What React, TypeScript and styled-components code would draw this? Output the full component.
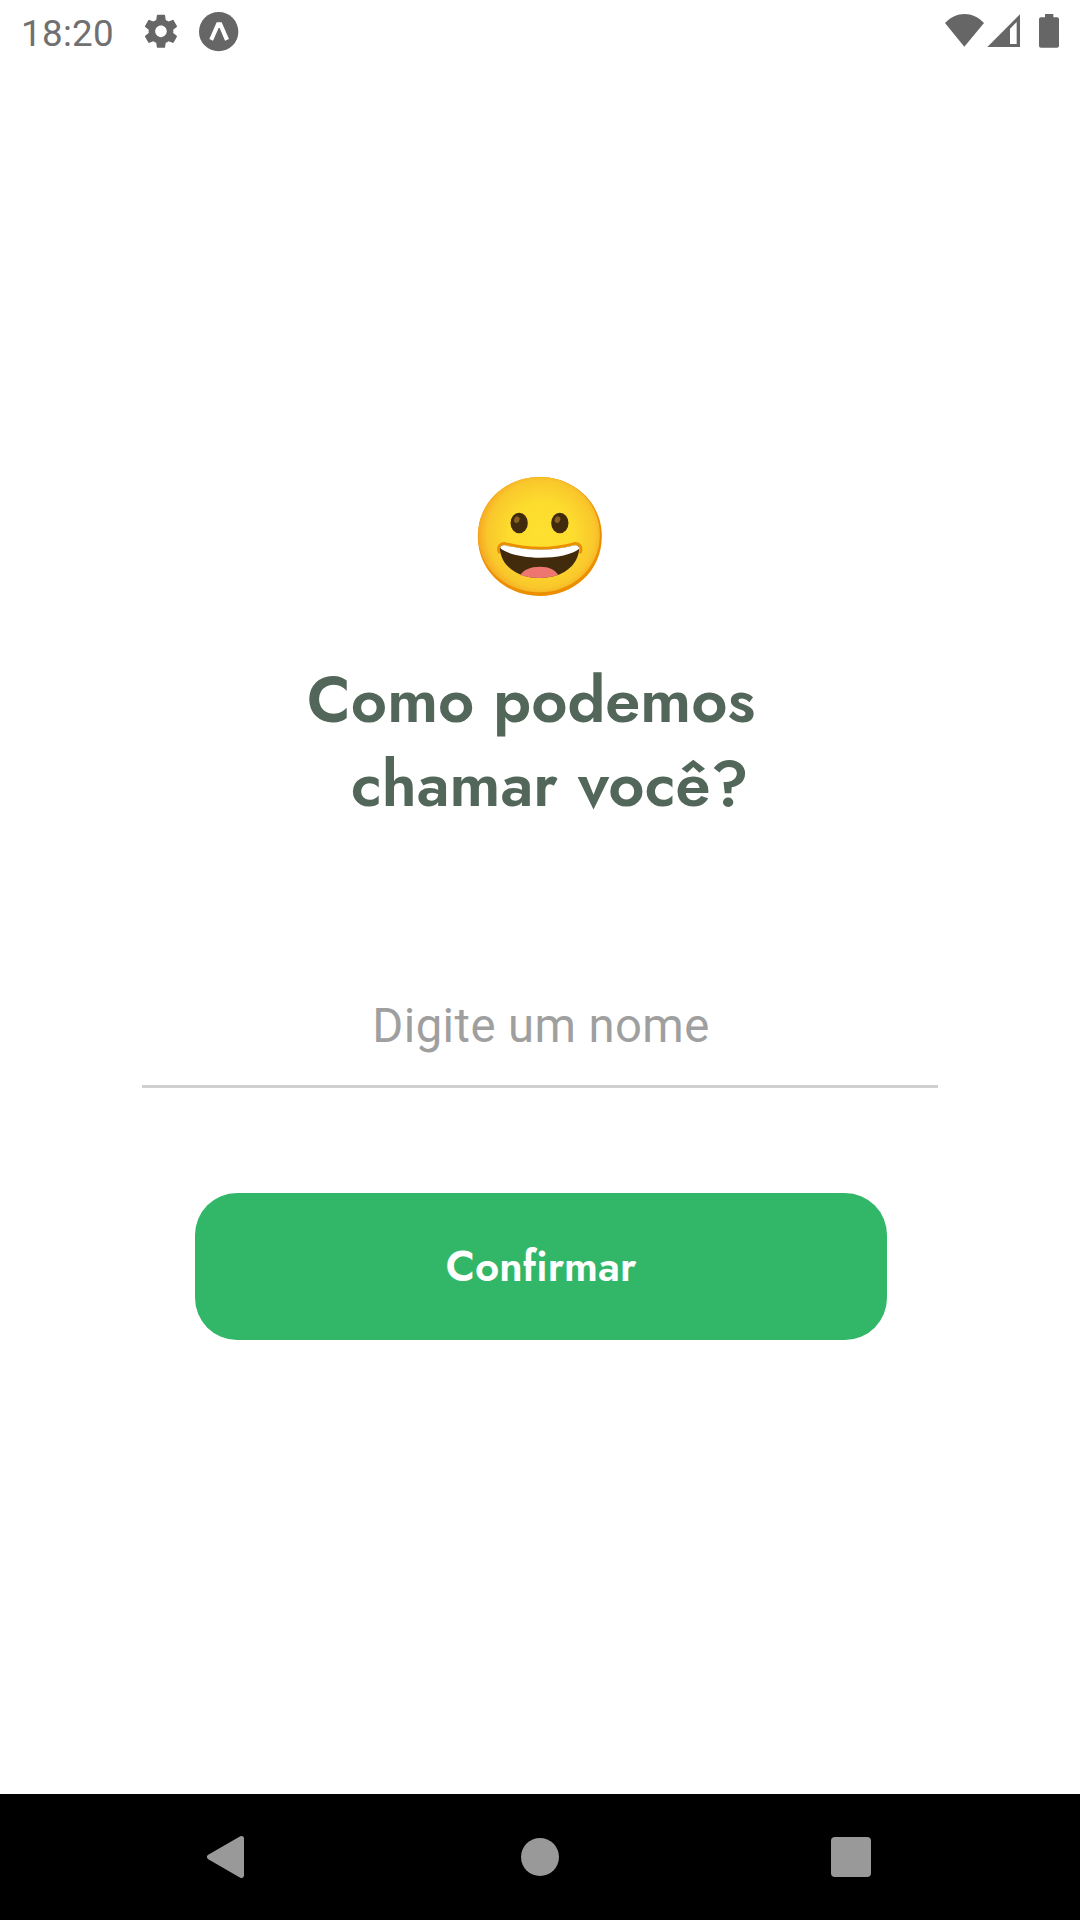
import React from 'react';
import styled, { createGlobalStyle } from 'styled-components';

const GlobalStyle = createGlobalStyle`
  * { box-sizing: border-box; }
  body { margin: 0; background: #fff; }
`;

const Screen = styled.div`
  display: flex;
  flex-direction: column;
  width: 1080px;
  height: 1920px;
  background: #fff;
  overflow: hidden;
  font-family: Roboto, sans-serif;
`;

const StatusBar = styled.header`
  display: flex;
  align-items: flex-start;
  justify-content: space-between;
  height: 63px;
  flex: none;
  color: #707070;
`;

const StatusGroup = styled.div`
  display: flex;
  align-items: flex-start;
`;

const Clock = styled.time`
  width: 118px;
  margin-left: 21px;
  padding-top: 12px;
  font-size: 36.75px;
  line-height: 44px;
  letter-spacing: 0.3px;
`;

const Glyph = styled.svg<{ $w: number; $h: number }>`
  display: block;
  flex: none;
  width: ${(p) => p.$w}px;
  height: ${(p) => p.$h}px;
`;

const Content = styled.main`
  display: flex;
  flex: 1;
  flex-direction: column;
  align-items: center;
  padding-top: 397px;
`;

const Title = styled.h1`
  display: flex;
  flex-direction: column;
  width: 480px;
  margin: 49px 0 0;
  color: #52665a;
  font-family: Jost, Lato, sans-serif;
  font-size: 63px;
  font-weight: 600;
  line-height: 84px;
`;

const TitleLine = styled.span<{ $indent: number; $gap?: number }>`
  padding-left: ${(p) => p.$indent}px;
  word-spacing: ${(p) => p.$gap ?? 0}px;
  white-space: nowrap;
`;

const NameInput = styled.input`
  width: 796px;
  height: 124px;
  margin-top: 137px;
  padding: 2px 0 0 2px;
  border: 0;
  border-bottom: 3px solid #cfcfcf;
  outline: 0;
  background: transparent;
  color: #52665a;
  font-family: Roboto, sans-serif;
  font-size: 47.25px;
  letter-spacing: 0.42px;
  text-align: center;
  &::placeholder { color: #9f9f9f; opacity: 1; }
`;

const ConfirmButton = styled.button`
  display: flex;
  align-items: center;
  justify-content: center;
  width: 692px;
  height: 147px;
  margin: 105px 0 0 2px;
  padding: 0;
  border: 0;
  border-radius: 42px;
  background: #32b768;
  color: #fff;
  font-family: Jost, Lato, sans-serif;
  font-size: 42px;
  font-weight: 600;
  line-height: 56px;
`;

const NavBar = styled.nav`
  display: flex;
  align-items: center;
  justify-content: space-between;
  height: 126px;
  flex: none;
  padding: 0 209px 0 206px;
  background: #000;
`;

const NavButton = styled.button`
  padding: 0;
  border: 0;
  background: none;
`;

function Emoji() {
  return (
    <Glyph $w={160} $h={150} viewBox="0.5 0 480 450">
      <defs>
        <radialGradient id="face" cx="244" cy="222" r="193" gradientUnits="userSpaceOnUse">
          <stop offset="0" stopColor="#fde030" />
          <stop offset=".5" stopColor="#fddc2e" />
          <stop offset=".84" stopColor="#f9c72b" />
          <stop offset="1" stopColor="#f5a422" />
        </radialGradient>
      </defs>
      <path d="M240 51 C340 51 426 125 426 229 C426 335 340 408 240 408 C140 408 54 335 54 229 C54 125 140 51 240 51Z" fill="#eb8f00" />
      <path d="M239 51 C338 51 420 123 420 225 C420 325 336 397 239 397 C140 397 55 326 55 225 C55 123 140 51 239 51Z" fill="url(#face)" />
      <ellipse cx="178" cy="189" rx="26" ry="31" fill="#422b0d" />
      <ellipse cx="300" cy="189" rx="26" ry="31" fill="#422b0d" />
      <ellipse cx="171" cy="179" rx="8" ry="10" fill="#896024" transform="rotate(25 171 179)" />
      <ellipse cx="293" cy="179" rx="8" ry="10" fill="#896024" transform="rotate(25 293 179)" />
      <path d="M118 277 C112 262 121 247 138 251 Q240 278 341 251 C359 247 368 262 362 277" fill="none" stroke="#eb8f00" strokeWidth="8" strokeLinecap="round" />
      <path d="M120 265 C121 256 129 254 140 257 Q240 281 340 257 C352 254 359 258 358 268 C354 318 308 354 240 354 C172 354 123 318 120 265Z" fill="#422b0d" />
      <path d="M121 264 C122 256 130 254 140 257 Q240 281 340 257 C350 254 357 257 358 266 C340 283 290 293 240 293 C190 293 140 281 121 264Z" fill="#fff" />
      <path d="M181 345 C192 329 212 320 240 320 C268 320 287 330 295 345 C262 357 214 357 181 345Z" fill="#ed7770" />
    </Glyph>
  );
}

export default function App() {
  return (
    <Screen>
      <GlobalStyle />
      <StatusBar>
        <StatusGroup>
          <Clock>18:20</Clock>
          <Glyph $w={121} $h={63} viewBox="417 0 363 189" fill="#666">
            <path
              transform="translate(423.5 34.7) scale(4.95)"
              d="M19.43 12.98c.04-.32.07-.64.07-.98s-.03-.66-.07-.98l2.11-1.65c.19-.15.24-.42.12-.64l-2-3.46c-.12-.22-.39-.3-.61-.22l-2.49 1c-.52-.4-1.08-.73-1.69-.98l-.38-2.65C14.46 2.18 14.25 2 14 2h-4c-.25 0-.46.18-.49.42l-.38 2.65c-.61.25-1.17.59-1.69.98l-2.49-1c-.23-.09-.49 0-.61.22l-2 3.46c-.13.22-.07.49.12.64l2.11 1.65c-.04.32-.07.65-.07.98s.03.66.07.98l-2.11 1.65c-.19.15-.24.42-.12.64l2 3.46c.12.22.39.3.61.22l2.49-1c.52.4 1.08.73 1.69.98l.38 2.65c.03.24.24.42.49.42h4c.25 0 .46-.18.49-.42l.38-2.65c.61-.25 1.17-.59 1.69-.98l2.49 1c.23.09.49 0 .61-.22l2-3.46c.12-.22.07-.49-.12-.64l-2.11-1.65zM12 15.5c-1.93 0-3.5-1.57-3.5-3.5s1.57-3.5 3.5-3.5 3.5 1.57 3.5 3.5-1.57 3.5-3.5 3.5z"
            />
            <circle cx="656" cy="95" r="59" />
            <path d="M628 117 L650 67 H665 L687 117 L675 122 L659 84 H656 L639 122Z" fill="#fff" />
          </Glyph>
        </StatusGroup>
        <Glyph $w={160} $h={63} viewBox="0 0 480 189" fill="#666">
          <path d="M75 69 C109 33 158 33 192 69 L133 140Z" />
          <path fillRule="evenodd" d="M202 141 L300 43 V141Z M270 86 V132 H290 V66Z" />
          <path d="M375 42 H400 V52 H411 Q417 52 417 58 V137 Q417 143 411 143 H363 Q357 143 357 137 V58 Q357 52 363 52 H375Z" />
        </Glyph>
      </StatusBar>
      <Content>
        <Emoji />
        <Title>
          <TitleLine $indent={7}>Como podemos</TitleLine>
          <TitleLine $indent={51} $gap={1}>chamar você?</TitleLine>
        </Title>
        <NameInput placeholder="Digite um nome" />
        <ConfirmButton>Confirmar</ConfirmButton>
      </Content>
      <NavBar>
        <NavButton aria-label="Voltar">
          <Glyph $w={40} $h={44} viewBox="0 0 40 44">
            <path d="M35.5 3.5 L3.5 22 L35.5 40.5Z" fill="#999" stroke="#999" strokeWidth="5" strokeLinejoin="round" />
          </Glyph>
        </NavButton>
        <NavButton aria-label="Início">
          <Glyph $w={40} $h={40} viewBox="0 0 40 40">
            <circle cx="21" cy="20" r="19" fill="#999" />
          </Glyph>
        </NavButton>
        <NavButton aria-label="Recentes">
          <Glyph $w={40} $h={40} viewBox="0 0 40 40">
            <rect width="40" height="40" rx="4" fill="#999" />
          </Glyph>
        </NavButton>
      </NavBar>
    </Screen>
  );
}
